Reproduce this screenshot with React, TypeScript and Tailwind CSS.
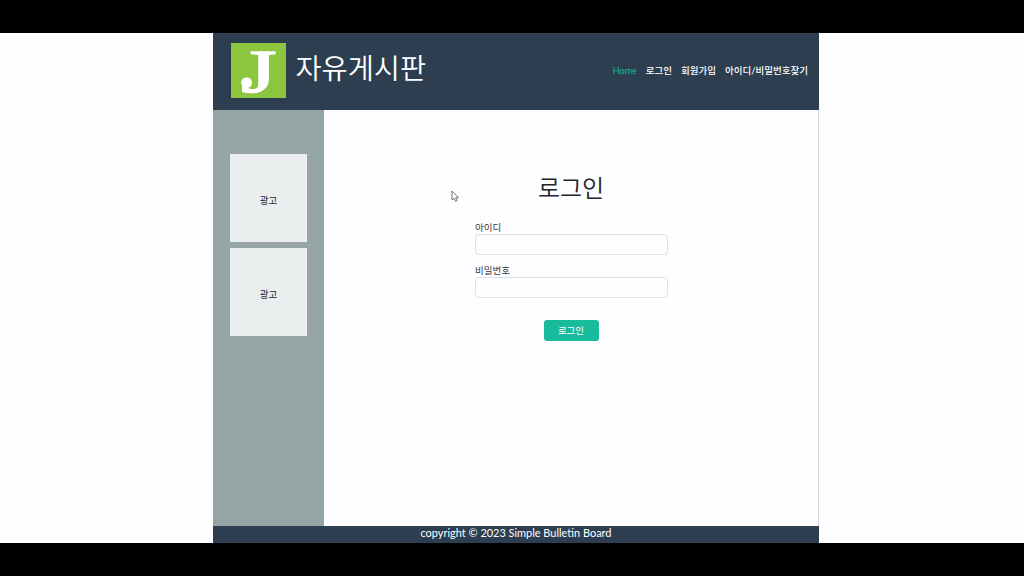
import React from "react";

const navItems = ["로그인", "회원가입", "아이디/비밀번호찾기"];

function Logo() {
  return (
    <svg width="55" height="55" viewBox="0 0 55 55" overflow="visible" className="shrink-0" aria-label="J">
      <rect width="55" height="55" fill="#8cc63f" />
      <text
        transform="translate(10.2 48.6) scale(1.48 1)"
        fill="#ffffff"
        stroke="#ffffff"
        strokeWidth="1.5"
        fontFamily="'Liberation Serif', serif"
        fontWeight="400"
        fontSize="61"
      >
        J
      </text>
      <circle cx="15.6" cy="39.6" r="5.4" fill="#ffffff" />
    </svg>
  );
}

function Header() {
  return (
    <header className="flex h-[77px] shrink-0 items-start justify-between bg-[#2c3e50] pt-[10px] pr-[11px] pl-[18px] text-white">
      <div className="flex items-start">
        <Logo />
        <h1 className="ml-[9.5px] pt-[4px] text-[28.4px] leading-[42px] font-[350] whitespace-nowrap">자유게시판</h1>
      </div>
      <nav className="flex gap-[9px] pt-[20px] text-[9.5px] leading-4 font-medium whitespace-nowrap">
        <a className="text-[9px] font-normal text-[#18bc9c]">Home</a>
        {navItems.map((item) => (
          <a key={item}>{item}</a>
        ))}
      </nav>
    </header>
  );
}

function Sidebar() {
  return (
    <aside className="flex w-[111px] shrink-0 flex-col items-center gap-[6px] bg-[#95a5a6] pt-[44px]">
      {[1, 2].map((id) => (
        <div
          key={id}
          className="flex h-[88px] w-[77px] items-center justify-center bg-[#eaeeef] pt-[5px] text-[9.5px] leading-4"
        >
          광고
        </div>
      ))}
    </aside>
  );
}

function Field({ label, type }: { label: string; type: string }) {
  return (
    <label className="flex flex-col text-[9.5px] text-[#343a40]">
      <span className="h-[14px] pl-[0.5px] leading-[16px]">{label}</span>
      <input type={type} className="h-[21px] rounded-[4px] border border-[#dedfe4] bg-[#fefdff] px-2 outline-none" />
    </label>
  );
}

function LoginForm() {
  return (
    <form className="mx-auto flex w-[193px] flex-col pt-[60px]">
      <h2 className="text-center text-[24px] leading-[36px] font-[350] text-[#212529]">로그인</h2>
      <div className="mt-[14px] flex flex-col gap-[8px]">
        <Field label="아이디" type="text" />
        <Field label="비밀번호" type="password" />
      </div>
      <button
        type="button"
        className="mt-[22px] h-[21px] w-[55px] self-center rounded-[3px] bg-[#18bc9c] text-[9.5px] leading-[20px] text-white"
      >
        로그인
      </button>
    </form>
  );
}

function Cursor() {
  return (
    <svg width="9" height="13" viewBox="0 0 9 13" className="absolute top-[190px] left-[451px]">
      <path d="M1 1V10L3.2 8.2L4.6 11.4L6.1 10.7L4.8 7.7H7.5Z" fill="#fff" stroke="#50545a" strokeWidth=".8" />
    </svg>
  );
}

export default function App() {
  return (
    <div className="relative flex h-[576px] w-[1024px] flex-col overflow-hidden bg-[#fefdff] font-['Lato','Noto_Sans_CJK_KR',sans-serif] text-[#212529]">
      <div className="h-[33px] shrink-0 bg-black" />
      <div className="ml-[213px] flex h-[510px] w-[606px] shrink-0 flex-col">
        <Header />
        <div className="flex min-h-0 flex-1">
          <Sidebar />
          <main className="flex-1 border-r border-[#d3d6da]">
            <LoginForm />
          </main>
        </div>
        <footer className="h-[17px] shrink-0 bg-[#2c3e50] text-center text-[10.95px] leading-[14px] text-white">
          copyright © 2023 Simple Bulletin Board
        </footer>
      </div>
      <div className="h-[33px] shrink-0 bg-black" />
      <Cursor />
    </div>
  );
}
